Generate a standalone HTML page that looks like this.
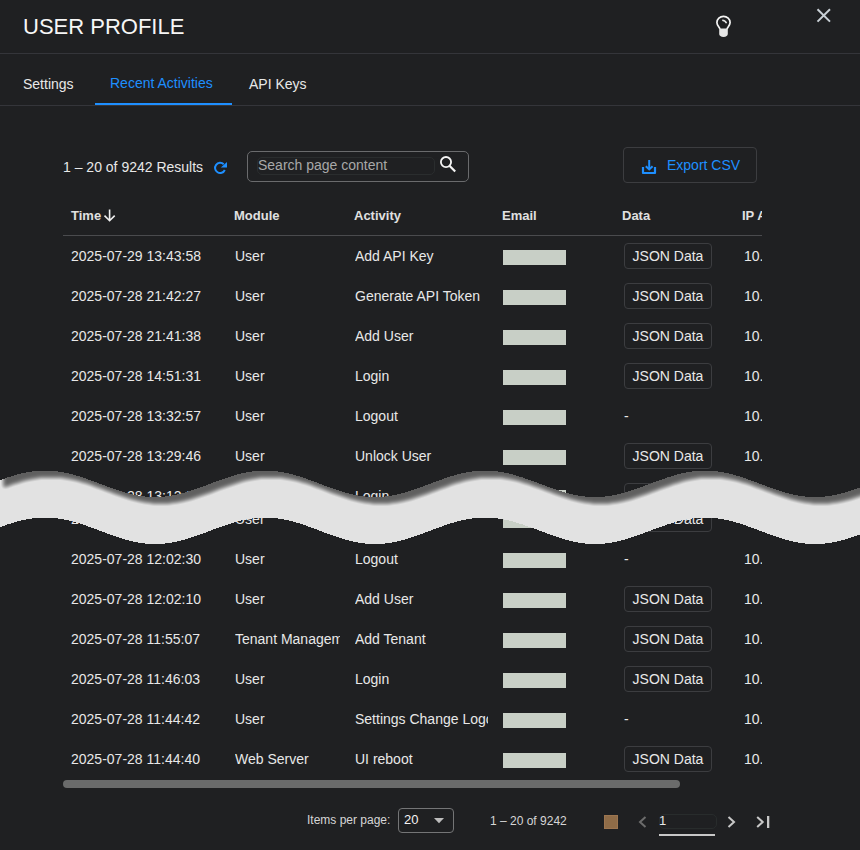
<!DOCTYPE html>
<html><head><meta charset="utf-8">
<style>
*{margin:0;padding:0;box-sizing:border-box}
html,body{width:860px;height:850px;overflow:hidden;background:#1f2022}
body{font-family:"Liberation Sans",sans-serif;color:#e8e8e8;position:relative}
.a{position:absolute;white-space:nowrap;line-height:16px}
.clip{overflow:hidden}
.t{font-size:14px}
.hdr{font-size:13px;font-weight:bold;color:#e0e0e0}
.em{position:absolute;width:63px;height:15px;background:#c8cfc6}
.btn{position:absolute;width:88px;height:26px;border:1px solid #3c3d40;border-radius:4px;font-size:14px;line-height:24px;text-align:center;color:#e8e8e8;white-space:nowrap}
.hline{position:absolute;height:1px;background:#34353a}
</style></head><body>
<!-- header -->
<div class="a" style="left:23px;top:14px;font-size:22px;line-height:26px;color:#f6f6f6">USER PROFILE</div>
<div class="hline" style="left:0;top:53px;width:860px"></div>
<svg style="position:absolute;left:705px;top:5px" width="40" height="40" viewBox="705 5 40 40"><path d="M720,29 C719.6,27 716.9,25.6 716.9,22.6 A6.6,6.2 0 0 1 730.1,22.6 C730.1,25.6 727.4,27 727,29" fill="none" stroke="#f4f4f4" stroke-width="1.7"/><path d="M719.2,28.4 H727.8 V34 Q727.6,36.6 723.5,37 Q719.4,36.6 719.2,34 Z" fill="#e6e6e6"/><path d="M722.2,20.3 Q725.4,20.4 726.5,23.2" fill="none" stroke="#e8e8e8" stroke-width="1.5"/></svg>
<svg style="position:absolute;left:810px;top:2px" width="26" height="26" viewBox="0 0 26 26"><path d="M7.5,7.2 L20,19.6 M20,7.2 L7.5,19.6" stroke="#c9d0d6" stroke-width="2"/></svg>
<!-- tabs -->
<div class="a t" style="left:23px;top:76px;color:#e8e8e8">Settings</div>
<div class="a t" style="left:110px;top:75px;color:#1e8fff">Recent Activities</div>
<div class="a t" style="left:249px;top:76px;color:#e8e8e8">API Keys</div>
<div style="position:absolute;left:95px;top:103px;width:137px;height:2px;background:#1e8fff"></div>
<div class="hline" style="left:0;top:105px;width:860px"></div>

<!-- toolbar -->
<svg style="position:absolute;left:207px;top:155px" width="26" height="26" viewBox="0 0 26 26"><path d="M17.8,15 A5.1,5.1 0 1 1 16.7,9.2" fill="none" stroke="#1e8fff" stroke-width="2"/><path d="M13.8,12.6 L20,6.9 L20,12.6 Z" fill="#1e8fff"/></svg>
<div class="a t" style="left:63px;top:159px">1 – 20 of 9242 Results</div>
<div style="position:absolute;left:247px;top:151px;width:222px;height:31px;border:1px solid #6a6b6d;border-radius:5px"></div>
<div style="position:absolute;left:257px;top:157px;width:178px;height:18px;border:1px solid #2a2d2e;border-radius:5px"></div>
<div class="a t" style="left:258px;top:157px;color:#a8a8a8">Search page content</div>
<svg style="position:absolute;left:436px;top:152px" width="24" height="24" viewBox="0 0 24 24"><circle cx="10" cy="10.1" r="5.1" fill="none" stroke="#f4f4f4" stroke-width="1.8"/><line x1="13.5" y1="13.8" x2="19.2" y2="19.5" stroke="#f4f4f4" stroke-width="2.2"/></svg>
<div style="position:absolute;left:623px;top:147px;width:134px;height:36px;border:1px solid #3c3d40;border-radius:4px"></div>
<div class="a t" style="left:667px;top:157px;color:#1e8fff">Export CSV</div>
<svg style="position:absolute;left:634px;top:152px" width="30" height="30" viewBox="0 0 30 30"><path d="M9,15 V21 H21 V15" fill="none" stroke="#1e8fff" stroke-width="2.2" stroke-linejoin="round"/><line x1="15.2" y1="8" x2="15.2" y2="17" stroke="#1e8fff" stroke-width="2"/><path d="M11.8,14.2 L15.2,17.4 L18.6,14.2" fill="none" stroke="#1e8fff" stroke-width="2"/></svg>

<!-- table -->
<div class="a hdr" style="left:71px;top:208px">Time</div>
<svg style="position:absolute;left:102px;top:207px" width="16" height="16" viewBox="0 0 16 16"><path d="M7.6,2.5 V13.5 M2.5,8.6 L7.6,13.7 L12.7,8.6" fill="none" stroke="#f0f0f0" stroke-width="1.6"/></svg>
<div class="a hdr" style="left:234px;top:208px">Module</div>
<div class="a hdr" style="left:354px;top:208px">Activity</div>
<div class="a hdr" style="left:502px;top:208px">Email</div>
<div class="a hdr" style="left:622px;top:208px">Data</div>
<div class="a hdr clip" style="left:742px;top:208px;width:20px">IP Address</div>
<div class="hline" style="left:63px;top:235px;width:699px;background:#4a4b4e"></div>
<div class="a t" style="left:71px;top:248px">2025-07-29 13:43:58</div>
<div class="a t clip" style="left:235px;top:248px;width:105px">User</div>
<div class="a t clip" style="left:355px;top:248px;width:133px">Add API Key</div>
<div class="em" style="left:503px;top:250px"></div>
<div class="btn" style="left:624px;top:243px">JSON Data</div>
<div class="a t clip" style="left:744px;top:248px;width:18px">10.0.0.1</div>
<div class="a t" style="left:71px;top:288px">2025-07-28 21:42:27</div>
<div class="a t clip" style="left:235px;top:288px;width:105px">User</div>
<div class="a t clip" style="left:355px;top:288px;width:133px">Generate API Token</div>
<div class="em" style="left:503px;top:290px"></div>
<div class="btn" style="left:624px;top:283px">JSON Data</div>
<div class="a t clip" style="left:744px;top:288px;width:18px">10.0.0.1</div>
<div class="a t" style="left:71px;top:328px">2025-07-28 21:41:38</div>
<div class="a t clip" style="left:235px;top:328px;width:105px">User</div>
<div class="a t clip" style="left:355px;top:328px;width:133px">Add User</div>
<div class="em" style="left:503px;top:330px"></div>
<div class="btn" style="left:624px;top:323px">JSON Data</div>
<div class="a t clip" style="left:744px;top:328px;width:18px">10.0.0.1</div>
<div class="a t" style="left:71px;top:368px">2025-07-28 14:51:31</div>
<div class="a t clip" style="left:235px;top:368px;width:105px">User</div>
<div class="a t clip" style="left:355px;top:368px;width:133px">Login</div>
<div class="em" style="left:503px;top:370px"></div>
<div class="btn" style="left:624px;top:363px">JSON Data</div>
<div class="a t clip" style="left:744px;top:368px;width:18px">10.0.0.1</div>
<div class="a t" style="left:71px;top:408px">2025-07-28 13:32:57</div>
<div class="a t clip" style="left:235px;top:408px;width:105px">User</div>
<div class="a t clip" style="left:355px;top:408px;width:133px">Logout</div>
<div class="em" style="left:503px;top:410px"></div>
<div class="a t" style="left:624px;top:408px">-</div>
<div class="a t clip" style="left:744px;top:408px;width:18px">10.0.0.1</div>
<div class="a t" style="left:71px;top:448px">2025-07-28 13:29:46</div>
<div class="a t clip" style="left:235px;top:448px;width:105px">User</div>
<div class="a t clip" style="left:355px;top:448px;width:133px">Unlock User</div>
<div class="em" style="left:503px;top:450px"></div>
<div class="btn" style="left:624px;top:443px">JSON Data</div>
<div class="a t clip" style="left:744px;top:448px;width:18px">10.0.0.1</div>
<div class="a t" style="left:71px;top:488px">2025-07-28 13:12:08</div>
<div class="a t clip" style="left:235px;top:488px;width:105px">User</div>
<div class="a t clip" style="left:355px;top:488px;width:133px">Login</div>
<div class="em" style="left:503px;top:490px"></div>
<div class="btn" style="left:624px;top:483px">JSON Data</div>
<div class="a t clip" style="left:744px;top:488px;width:18px">10.0.0.1</div>
<div class="a t" style="left:71px;top:511px">2025-07-28 12:05:11</div>
<div class="a t clip" style="left:235px;top:511px;width:105px">User</div>
<div class="a t clip" style="left:355px;top:511px;width:133px">Login</div>
<div class="em" style="left:503px;top:513px"></div>
<div class="btn" style="left:624px;top:506px">JSON Data</div>
<div class="a t clip" style="left:744px;top:511px;width:18px">10.0.0.1</div>
<div class="a t" style="left:71px;top:551px">2025-07-28 12:02:30</div>
<div class="a t clip" style="left:235px;top:551px;width:105px">User</div>
<div class="a t clip" style="left:355px;top:551px;width:133px">Logout</div>
<div class="em" style="left:503px;top:553px"></div>
<div class="a t" style="left:624px;top:551px">-</div>
<div class="a t clip" style="left:744px;top:551px;width:18px">10.0.0.1</div>
<div class="a t" style="left:71px;top:591px">2025-07-28 12:02:10</div>
<div class="a t clip" style="left:235px;top:591px;width:105px">User</div>
<div class="a t clip" style="left:355px;top:591px;width:133px">Add User</div>
<div class="em" style="left:503px;top:593px"></div>
<div class="btn" style="left:624px;top:586px">JSON Data</div>
<div class="a t clip" style="left:744px;top:591px;width:18px">10.0.0.1</div>
<div class="a t" style="left:71px;top:631px">2025-07-28 11:55:07</div>
<div class="a t clip" style="left:235px;top:631px;width:105px">Tenant Management</div>
<div class="a t clip" style="left:355px;top:631px;width:133px">Add Tenant</div>
<div class="em" style="left:503px;top:633px"></div>
<div class="btn" style="left:624px;top:626px">JSON Data</div>
<div class="a t clip" style="left:744px;top:631px;width:18px">10.0.0.1</div>
<div class="a t" style="left:71px;top:671px">2025-07-28 11:46:03</div>
<div class="a t clip" style="left:235px;top:671px;width:105px">User</div>
<div class="a t clip" style="left:355px;top:671px;width:133px">Login</div>
<div class="em" style="left:503px;top:673px"></div>
<div class="btn" style="left:624px;top:666px">JSON Data</div>
<div class="a t clip" style="left:744px;top:671px;width:18px">10.0.0.1</div>
<div class="a t" style="left:71px;top:711px">2025-07-28 11:44:42</div>
<div class="a t clip" style="left:235px;top:711px;width:105px">User</div>
<div class="a t clip" style="left:355px;top:711px;width:133px">Settings Change Logo</div>
<div class="em" style="left:503px;top:713px"></div>
<div class="a t" style="left:624px;top:711px">-</div>
<div class="a t clip" style="left:744px;top:711px;width:18px">10.0.0.1</div>
<div class="a t" style="left:71px;top:751px">2025-07-28 11:44:40</div>
<div class="a t clip" style="left:235px;top:751px;width:105px">Web Server</div>
<div class="a t clip" style="left:355px;top:751px;width:133px">UI reboot</div>
<div class="em" style="left:503px;top:753px"></div>
<div class="btn" style="left:624px;top:746px">JSON Data</div>
<div class="a t clip" style="left:744px;top:751px;width:18px">10.0.0.1</div>

<!-- scrollbar -->
<div style="position:absolute;left:63px;top:780px;width:617px;height:8px;border-radius:4px;background:#6a6b6b"></div>

<!-- footer -->
<div class="a" style="left:307px;top:812px;font-size:12px;color:#d6d6d6">Items per page:</div>
<div style="position:absolute;left:398px;top:808px;width:56px;height:25px;border:1px solid #747576;border-radius:4px"></div>
<div class="a" style="left:404px;top:812px;font-size:13px;color:#f4f4f4">20</div>
<svg style="position:absolute;left:430px;top:814px" width="18" height="12" viewBox="0 0 18 12"><path d="M4,4 L14,4 L9,9.3 Z" fill="#bdbdbd"/></svg>
<div class="a" style="left:490px;top:813px;font-size:12px;color:#d6d6d6">1 – 20 of 9242</div>
<div style="position:absolute;left:604px;top:815px;width:14px;height:14px;background:#8f6c48;border:1px solid #9c7550"></div>
<svg style="position:absolute;left:634px;top:812px" width="18" height="20" viewBox="0 0 18 20"><path d="M11.5,5 L6,10 L11.5,15" fill="none" stroke="#6c6c6c" stroke-width="2"/></svg>
<div style="position:absolute;left:659px;top:814px;width:58px;height:15px;border:1px solid #282c2c;border-radius:5px"></div>
<div class="a" style="left:659px;top:813px;font-size:13px;color:#e8e8e8">1</div>
<div style="position:absolute;left:659px;top:833.5px;width:56px;height:2px;background:#c8c8c8"></div>
<svg style="position:absolute;left:722px;top:812px" width="18" height="20" viewBox="0 0 18 20"><path d="M6.5,5 L12,10 L6.5,15" fill="none" stroke="#c8c8c8" stroke-width="2"/></svg>
<svg style="position:absolute;left:750px;top:812px" width="24" height="20" viewBox="0 0 24 20"><path d="M7.2,5 L12.7,10 L7.2,15" fill="none" stroke="#c8c8c8" stroke-width="2"/><rect x="17" y="4" width="2.3" height="12" fill="#c8c8c8"/></svg>
<svg style="position:absolute;left:0;top:0" width="860" height="850" viewBox="0 0 860 850">
<defs><filter id="ws" filterUnits="userSpaceOnUse" x="-3" y="300" width="900" height="400" color-interpolation-filters="sRGB">
<feColorMatrix in="SourceAlpha" type="matrix" values="0 0 0 0 0  0 0 0 0 0  0 0 0 0 0  0 0 0 -1 1" result="inv"/>
<feOffset in="inv" dx="6" dy="7.2" result="off"/>
<feGaussianBlur in="off" stdDeviation="2.2" result="bl"/>
<feComponentTransfer in="bl" result="bl2"><feFuncA type="linear" slope="1.15" intercept="-0.15"/></feComponentTransfer>
<feComposite in="bl2" in2="SourceAlpha" operator="in" result="cl"/>
<feColorMatrix in="cl" type="matrix" values="0 0 0 0 0  0 0 0 0 0  0 0 0 0 0  0 0 0 0.58 0" result="sh"/>
<feMerge><feMergeNode in="SourceGraphic"/><feMergeNode in="sh"/></feMerge>
</filter></defs>
<path d="M-20,487.5 L-17,486.4 L-14,485.3 L-11,484.2 L-8,483.0 L-5,481.9 L-2,480.8 L1,479.7 L4,478.7 L7,477.6 L10,476.7 L13,475.7 L16,474.9 L19,474.1 L22,473.3 L25,472.7 L28,472.1 L31,471.6 L34,471.2 L37,470.9 L40,470.7 L43,470.6 L46,470.6 L49,470.7 L52,470.9 L55,471.1 L58,471.5 L61,472.0 L64,472.5 L67,473.1 L70,473.8 L73,474.6 L76,475.4 L79,476.3 L82,477.3 L85,478.3 L88,479.4 L91,480.4 L94,481.5 L97,482.7 L100,483.8 L103,484.9 L106,486.1 L109,487.2 L112,488.2 L115,489.3 L118,490.3 L121,491.3 L124,492.2 L127,493.0 L130,493.8 L133,494.5 L136,495.1 L139,495.6 L142,496.1 L145,496.5 L148,496.7 L151,496.9 L154,497.0 L157,497.0 L160,496.9 L163,496.7 L166,496.4 L169,496.0 L172,495.5 L175,494.9 L178,494.3 L181,493.5 L184,492.7 L187,491.9 L190,490.9 L193,490.0 L196,488.9 L199,487.9 L202,486.8 L205,485.7 L208,484.6 L211,483.4 L214,482.3 L217,481.2 L220,480.1 L223,479.0 L226,478.0 L229,477.0 L232,476.0 L235,475.2 L238,474.3 L241,473.6 L244,472.9 L247,472.3 L250,471.8 L253,471.4 L256,471.0 L259,470.8 L262,470.6 L265,470.6 L268,470.6 L271,470.8 L274,471.0 L277,471.4 L280,471.8 L283,472.3 L286,472.9 L289,473.6 L292,474.3 L295,475.2 L298,476.0 L301,477.0 L304,478.0 L307,479.0 L310,480.1 L313,481.2 L316,482.3 L319,483.4 L322,484.6 L325,485.7 L328,486.8 L331,487.9 L334,488.9 L337,490.0 L340,490.9 L343,491.9 L346,492.7 L349,493.5 L352,494.3 L355,494.9 L358,495.5 L361,496.0 L364,496.4 L367,496.7 L370,496.9 L373,497.0 L376,497.0 L379,496.9 L382,496.7 L385,496.5 L388,496.1 L391,495.6 L394,495.1 L397,494.5 L400,493.8 L403,493.0 L406,492.2 L409,491.3 L412,490.3 L415,489.3 L418,488.2 L421,487.2 L424,486.1 L427,484.9 L430,483.8 L433,482.7 L436,481.5 L439,480.4 L442,479.4 L445,478.3 L448,477.3 L451,476.3 L454,475.4 L457,474.6 L460,473.8 L463,473.1 L466,472.5 L469,472.0 L472,471.5 L475,471.1 L478,470.9 L481,470.7 L484,470.6 L487,470.6 L490,470.7 L493,470.9 L496,471.2 L499,471.6 L502,472.1 L505,472.7 L508,473.3 L511,474.1 L514,474.9 L517,475.7 L520,476.7 L523,477.6 L526,478.7 L529,479.7 L532,480.8 L535,481.9 L538,483.0 L541,484.2 L544,485.3 L547,486.4 L550,487.5 L553,488.6 L556,489.6 L559,490.6 L562,491.6 L565,492.4 L568,493.3 L571,494.0 L574,494.7 L577,495.3 L580,495.8 L583,496.2 L586,496.6 L589,496.8 L592,497.0 L595,497.0 L598,497.0 L601,496.8 L604,496.6 L607,496.2 L610,495.8 L613,495.3 L616,494.7 L619,494.0 L622,493.3 L625,492.4 L628,491.6 L631,490.6 L634,489.6 L637,488.6 L640,487.5 L643,486.4 L646,485.3 L649,484.2 L652,483.0 L655,481.9 L658,480.8 L661,479.7 L664,478.7 L667,477.6 L670,476.7 L673,475.7 L676,474.9 L679,474.1 L682,473.3 L685,472.7 L688,472.1 L691,471.6 L694,471.2 L697,470.9 L700,470.7 L703,470.6 L706,470.6 L709,470.7 L712,470.9 L715,471.1 L718,471.5 L721,472.0 L724,472.5 L727,473.1 L730,473.8 L733,474.6 L736,475.4 L739,476.3 L742,477.3 L745,478.3 L748,479.4 L751,480.4 L754,481.5 L757,482.7 L760,483.8 L763,484.9 L766,486.1 L769,487.2 L772,488.2 L775,489.3 L778,490.3 L781,491.3 L784,492.2 L787,493.0 L790,493.8 L793,494.5 L796,495.1 L799,495.6 L802,496.1 L805,496.5 L808,496.7 L811,496.9 L814,497.0 L817,497.0 L820,496.9 L823,496.7 L826,496.4 L829,496.0 L832,495.5 L835,494.9 L838,494.3 L841,493.5 L844,492.7 L847,491.9 L850,490.9 L853,490.0 L856,488.9 L859,487.9 L862,486.8 L865,485.7 L868,484.6 L871,483.4 L874,482.3 L877,481.2 L880,480.1 L880,527.1 L877,528.2 L874,529.3 L871,530.4 L868,531.6 L865,532.7 L862,533.8 L859,534.9 L856,535.9 L853,537.0 L850,537.9 L847,538.9 L844,539.7 L841,540.5 L838,541.3 L835,541.9 L832,542.5 L829,543.0 L826,543.4 L823,543.7 L820,543.9 L817,544.0 L814,544.0 L811,543.9 L808,543.7 L805,543.5 L802,543.1 L799,542.6 L796,542.1 L793,541.5 L790,540.8 L787,540.0 L784,539.2 L781,538.3 L778,537.3 L775,536.3 L772,535.2 L769,534.2 L766,533.1 L763,531.9 L760,530.8 L757,529.7 L754,528.5 L751,527.4 L748,526.4 L745,525.3 L742,524.3 L739,523.3 L736,522.4 L733,521.6 L730,520.8 L727,520.1 L724,519.5 L721,519.0 L718,518.5 L715,518.1 L712,517.9 L709,517.7 L706,517.6 L703,517.6 L700,517.7 L697,517.9 L694,518.2 L691,518.6 L688,519.1 L685,519.7 L682,520.3 L679,521.1 L676,521.9 L673,522.7 L670,523.7 L667,524.6 L664,525.7 L661,526.7 L658,527.8 L655,528.9 L652,530.0 L649,531.2 L646,532.3 L643,533.4 L640,534.5 L637,535.6 L634,536.6 L631,537.6 L628,538.6 L625,539.4 L622,540.3 L619,541.0 L616,541.7 L613,542.3 L610,542.8 L607,543.2 L604,543.6 L601,543.8 L598,544.0 L595,544.0 L592,544.0 L589,543.8 L586,543.6 L583,543.2 L580,542.8 L577,542.3 L574,541.7 L571,541.0 L568,540.3 L565,539.4 L562,538.6 L559,537.6 L556,536.6 L553,535.6 L550,534.5 L547,533.4 L544,532.3 L541,531.2 L538,530.0 L535,528.9 L532,527.8 L529,526.7 L526,525.7 L523,524.6 L520,523.7 L517,522.7 L514,521.9 L511,521.1 L508,520.3 L505,519.7 L502,519.1 L499,518.6 L496,518.2 L493,517.9 L490,517.7 L487,517.6 L484,517.6 L481,517.7 L478,517.9 L475,518.1 L472,518.5 L469,519.0 L466,519.5 L463,520.1 L460,520.8 L457,521.6 L454,522.4 L451,523.3 L448,524.3 L445,525.3 L442,526.4 L439,527.4 L436,528.5 L433,529.7 L430,530.8 L427,531.9 L424,533.1 L421,534.2 L418,535.2 L415,536.3 L412,537.3 L409,538.3 L406,539.2 L403,540.0 L400,540.8 L397,541.5 L394,542.1 L391,542.6 L388,543.1 L385,543.5 L382,543.7 L379,543.9 L376,544.0 L373,544.0 L370,543.9 L367,543.7 L364,543.4 L361,543.0 L358,542.5 L355,541.9 L352,541.3 L349,540.5 L346,539.7 L343,538.9 L340,537.9 L337,537.0 L334,535.9 L331,534.9 L328,533.8 L325,532.7 L322,531.6 L319,530.4 L316,529.3 L313,528.2 L310,527.1 L307,526.0 L304,525.0 L301,524.0 L298,523.0 L295,522.2 L292,521.3 L289,520.6 L286,519.9 L283,519.3 L280,518.8 L277,518.4 L274,518.0 L271,517.8 L268,517.6 L265,517.6 L262,517.6 L259,517.8 L256,518.0 L253,518.4 L250,518.8 L247,519.3 L244,519.9 L241,520.6 L238,521.3 L235,522.2 L232,523.0 L229,524.0 L226,525.0 L223,526.0 L220,527.1 L217,528.2 L214,529.3 L211,530.4 L208,531.6 L205,532.7 L202,533.8 L199,534.9 L196,535.9 L193,537.0 L190,537.9 L187,538.9 L184,539.7 L181,540.5 L178,541.3 L175,541.9 L172,542.5 L169,543.0 L166,543.4 L163,543.7 L160,543.9 L157,544.0 L154,544.0 L151,543.9 L148,543.7 L145,543.5 L142,543.1 L139,542.6 L136,542.1 L133,541.5 L130,540.8 L127,540.0 L124,539.2 L121,538.3 L118,537.3 L115,536.3 L112,535.2 L109,534.2 L106,533.1 L103,531.9 L100,530.8 L97,529.7 L94,528.5 L91,527.4 L88,526.4 L85,525.3 L82,524.3 L79,523.3 L76,522.4 L73,521.6 L70,520.8 L67,520.1 L64,519.5 L61,519.0 L58,518.5 L55,518.1 L52,517.9 L49,517.7 L46,517.6 L43,517.6 L40,517.7 L37,517.9 L34,518.2 L31,518.6 L28,519.1 L25,519.7 L22,520.3 L19,521.1 L16,521.9 L13,522.7 L10,523.7 L7,524.6 L4,525.7 L1,526.7 L-2,527.8 L-5,528.9 L-8,530.0 L-11,531.2 L-14,532.3 L-17,533.4 L-20,534.5 Z" fill="#e2e2e2" shape-rendering="crispEdges" filter="url(#ws)"/>
</svg>
</body></html>
